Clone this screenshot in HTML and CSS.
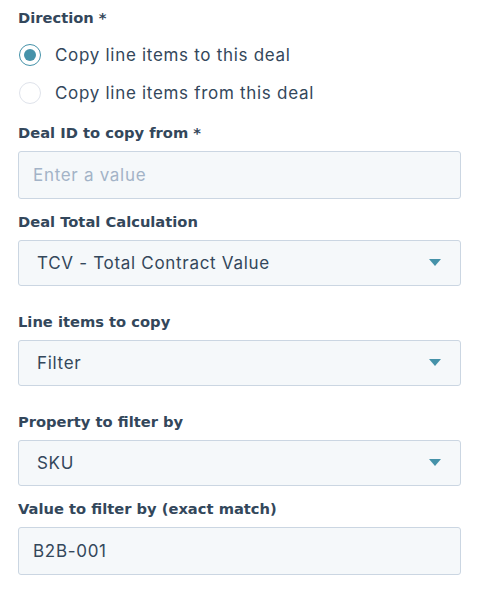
FILE: index.html
```html
<!DOCTYPE html>
<html>
<head>
<meta charset="utf-8">
<link rel="stylesheet" href="styles.css">
</head>
<body>
<form class="form">
  <div class="field first">
    <div class="label">Direction *</div>
    <div class="radios">
      <label class="radio"><span class="circle checked"><span class="dot"></span></span><span>Copy line items to this deal</span></label>
      <label class="radio"><span class="circle"></span><span>Copy line items from this deal</span></label>
    </div>
  </div>
  <div class="field">
    <div class="label">Deal ID to copy from *</div>
    <div class="input placeholder">Enter a value</div>
  </div>
  <div class="field wide">
    <div class="label">Deal Total Calculation</div>
    <div class="select"><span>TCV - Total Contract Value</span><span class="caret"></span></div>
  </div>
  <div class="field wide">
    <div class="label">Line items to copy</div>
    <div class="select"><span>Filter</span><span class="caret"></span></div>
  </div>
  <div class="field">
    <div class="label">Property to filter by</div>
    <div class="select"><span>SKU</span><span class="caret"></span></div>
  </div>
  <div class="field">
    <div class="label">Value to filter by (exact match)</div>
    <div class="input">B2B-001</div>
  </div>
</form>
</body>
</html>
```
FILE: styles.css
```css
html, body {
  margin: 0;
  padding: 0;
  background: #ffffff;
}
body {
  font-family: Inter, "Noto Sans", sans-serif;
  color: #33475b;
}
.form {
  width: 443px;
  padding: 8px 0 0 18px;
  display: flex;
  flex-direction: column;
}
.field {
  display: flex;
  flex-direction: column;
  margin-bottom: 13px;
}
.field.wide {
  margin-bottom: 26px;
}
.field.first {
  margin-bottom: 11px;
}
.label {
  font-family: "DejaVu Sans", sans-serif;
  font-size: 14.7px;
  font-weight: 700;
  line-height: 20px;
  margin-bottom: 8px;
}
.radios {
  display: flex;
  flex-direction: column;
}
.radio {
  display: flex;
  align-items: center;
  height: 38px;
  font-size: 17px;
  letter-spacing: 0.7px;
}
.circle {
  box-sizing: border-box;
  width: 22px;
  height: 22px;
  border-radius: 50%;
  border: 1px solid #dfe3eb;
  margin: 0 14px 0 1px;
  display: flex;
  align-items: center;
  justify-content: center;
  background: #fff;
}
.circle.checked {
  border: 1.5px solid #4592a9;
}
.dot {
  width: 12px;
  height: 12px;
  border-radius: 50%;
  background: #4592a9;
}
.input, .select {
  box-sizing: border-box;
  height: 48px;
  border: 1px solid #cbd6e2;
  border-radius: 3px;
  background: #f5f8fa;
  display: flex;
  align-items: center;
  font-size: 17px;
  letter-spacing: 0.7px;
  padding: 0 14px;
}
.placeholder {
  color: #a3b3c7;
}
.select {
  height: 46px;
  padding: 0 19px 0 18px;
  justify-content: space-between;
}
.caret {
  width: 0;
  height: 0;
  border-left: 6.5px solid transparent;
  border-right: 6.5px solid transparent;
  border-top: 7px solid #4592a9;
  margin-top: -2px;
}
```
